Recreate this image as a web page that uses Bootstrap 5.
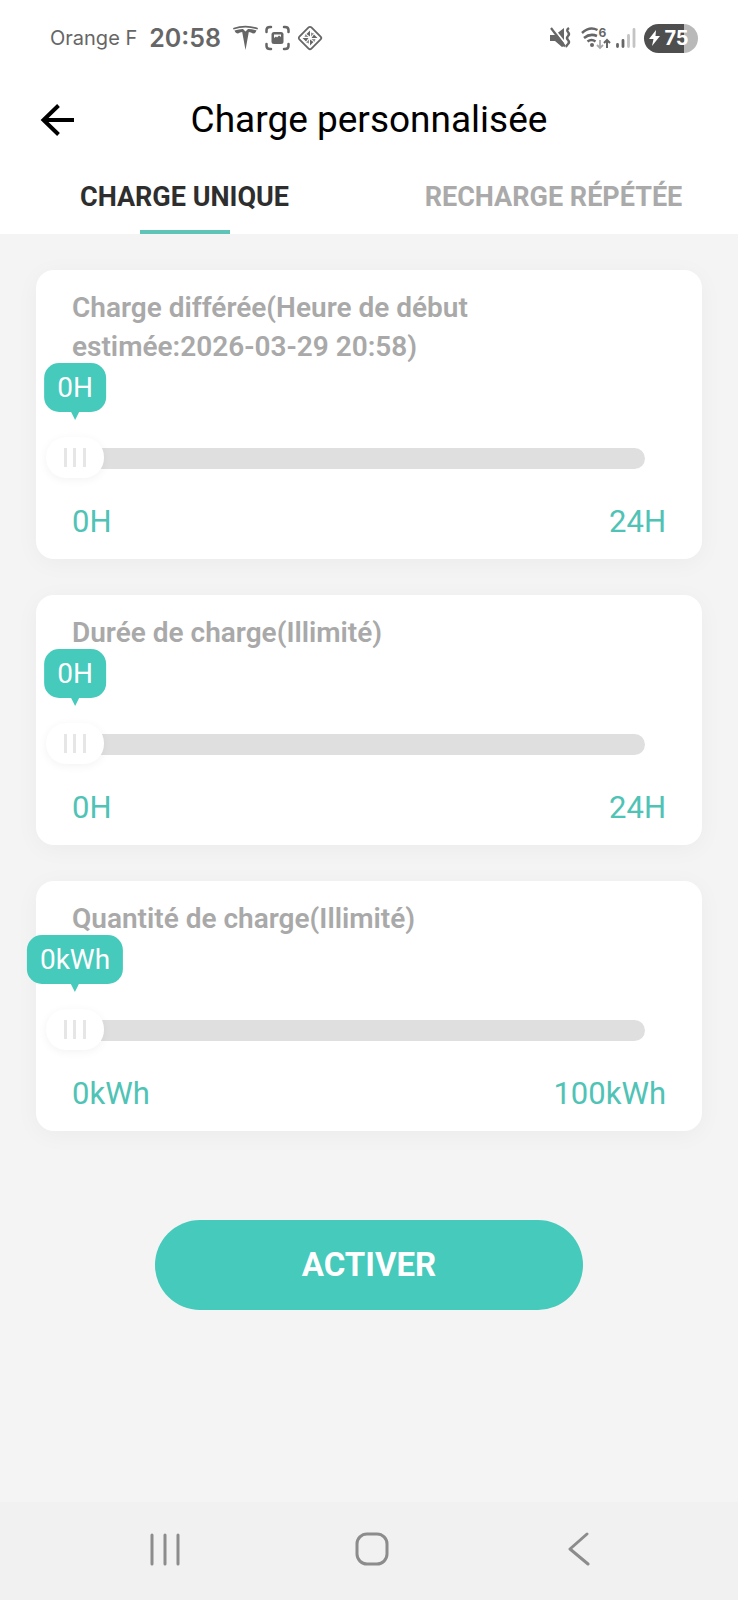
<!DOCTYPE html>
<html lang="fr">
<head>
<meta charset="utf-8">
<meta name="viewport" content="width=device-width, initial-scale=1">
<title>Charge personnalisée</title>
<link href="https://cdn.jsdelivr.net/npm/bootstrap@5.3.0/dist/css/bootstrap.min.css" rel="stylesheet">
<style>
:root { --teal: #45cabb; --page: #f4f4f4; }
body { background: var(--page); font-family: Roboto, "Liberation Sans", sans-serif; color: #000; }

/* Phone status bar */
.status { height: 76px; padding: 0 40px 0 50px; color: #666; font-family: Inter, Roboto, sans-serif; }
.carrier { font-size: 20px; line-height: 28px; margin-right: 12px; }
.clock { font-size: 25px; line-height: 28px; font-weight: 600; margin-right: 12px; }
.status-left svg { margin-right: 7px; }
.battery { width: 54px; height: 29px; color: #fff; font-size: 20px; line-height: 29px; font-weight: 700;
  background: linear-gradient(90deg, #4e4e4e 75%, #b9b9b9 75%); }

/* App header */
.app-title { font-size: 37px; line-height: 48px; font-weight: 400; }
.title-row { height: 88px; padding: 0 40px; }
.title-side { width: 36px; height: 36px; }
.tab-btn { height: 70px; padding: 0 0 5px; border: 0; background: none; position: relative;
  font-size: 27px; line-height: 32px; font-weight: 700; color: #aaa; }
.tab-btn.active { color: #2e2e2e; }
.tab-btn.active::after { content: ""; position: absolute; left: 50%; bottom: 0; width: 90px; height: 4px;
  margin-left: -45px; background: #5ec4b8; }

/* Setting cards */
.panels { padding: 36px 36px 0; gap: 36px; }
.panel { --bs-card-border-width: 0; --bs-card-border-radius: 18px; box-shadow: 0 4px 24px rgba(0, 0, 0, .04); padding: 18px 0; }
.panel-title { padding: 0 36px; margin: 0 0 72px; font-size: 28px; line-height: 39px; font-weight: 600; color: #a9a9a9; }
.slider { position: relative; margin: 0 57px 23px 10px; height: 41px; }
.slider input { display: block; width: 100%; height: 41px; margin: 0; background: none; appearance: none; -webkit-appearance: none; }
.slider input::-webkit-slider-runnable-track { height: 21px; border-radius: 11px; background: linear-gradient(90deg, transparent 29px, #dfdfdf 29px); }
.slider input::-webkit-slider-thumb { -webkit-appearance: none; width: 58px; height: 41px; margin-top: -11px; border: 0; border-radius: 20px;
  background:
    linear-gradient(#e6e6e6, #e6e6e6) 18px 11px / 3px 19px no-repeat,
    linear-gradient(#e6e6e6, #e6e6e6) 27px 11px / 3px 19px no-repeat,
    linear-gradient(#e6e6e6, #e6e6e6) 37px 11px / 3px 19px no-repeat, #fff;
  box-shadow: 0 2px 10px rgba(0, 0, 0, .05); }
.bubble { position: absolute; left: 29px; bottom: 67px; transform: translateX(-50%); padding: 0 13px; border-radius: 15px;
  background: var(--teal); color: #fff; font-size: 28px; line-height: 49px; }
.bubble::after { content: ""; position: absolute; left: 50%; top: 100%; margin-left: -4px;
  border: 4px solid transparent; border-top: 8px solid var(--teal); border-bottom: 0; }
.bounds { padding: 0 36px; font-size: 31px; line-height: 39px; color: #4fc3b5; }

.activate { width: 58%; height: 90px; margin: 89px auto 60px; font-size: 33px; line-height: 40px; font-weight: 700;
  --bs-btn-color: #fff; --bs-btn-bg: var(--teal); --bs-btn-hover-color: #fff; --bs-btn-hover-bg: #3bb9ab; }

/* System navigation */
.sysnav { height: 98px; padding: 0 56px 5px 62px; background: #f1f1f1; }
.sysnav button { border: 0; background: none; }
</style>
</head>
<body>
<div class="d-flex flex-column min-vh-100">
  <header class="bg-white">
    <div class="status d-flex align-items-center justify-content-between">
      <div class="status-left d-flex align-items-center">
        <span class="carrier">Orange F</span>
        <span class="clock">20:58</span>
        <svg width="25" height="26" viewBox="0 0 25 26" fill="#666" aria-hidden="true"><path d="M0 3Q12.500-1.500 25 3L24.500 4.500Q12.500.500.500 4.500ZM1.500 5.500Q7 3.800 10 4L12.500 6.500 15 4Q18 3.800 23.500 5.500 22.500 8.500 20 8.500 18 7 15.800 7L12.500 25 9.200 7Q7 7 5 8.500 2.500 8.500 1.500 5.500Z"/></svg>
        <svg width="25" height="26" viewBox="0 0 25 26" fill="none" stroke="#666" stroke-width="2.500" stroke-linecap="round" aria-hidden="true"><path d="M1.500 7V5Q1.500 2 5 2H6M19 2h1q3.500 0 3.500 3v2M23.500 19v2q0 3-3.500 3h-1M6 24H5q-3.500 0-3.500-3v-2"/><rect x="6.500" y="7" width="12" height="12" rx="2.500" fill="#666" stroke="none"/><path d="M9 9.500h7v2.500l-2-1.500-2 2-1-1-2 1.500Z" fill="#fff" stroke="none"/></svg>
        <svg width="26" height="26" viewBox="0 0 26 26" fill="none" stroke="#666" aria-hidden="true"><rect x="4.500" y="4.500" width="17" height="17" rx="2" stroke-width="1.800" transform="rotate(45 13 13)"/><g fill="#666" stroke="none"><path d="M13 5.500v6L9.500 9ZM20.500 13h-6L17 9.500ZM13 20.500v-6l3.500 2.500ZM5.500 13h6L9 16.500Z"/><path d="M14 7.500l3 1-3 3ZM18.500 14l-1 3-3-3ZM12 18.500l-3-1 3-3ZM7.500 12l1-3 3 3Z" opacity=".7"/></g></svg>
      </div>
      <div class="d-flex align-items-center">
        <svg width="22" height="22" viewBox="0 0 22 22" fill="#666" aria-hidden="true"><path d="M0 8h5l9-7v18l-2 1-7-6H0Z"/><path d="M1.500-1l16 20" stroke="#fff" stroke-width="2"/><path d="M1 1l14 18.500" stroke="#666" stroke-width="2.200"/><path d="M19 1q-3 2-1 4t0 4 0 4 0 4-1 3" fill="none" stroke="#666" stroke-width="2.400"/></svg>
        <svg class="ms-2" width="32" height="28" viewBox="0 -3 32 28" fill="none" stroke="#666" stroke-width="2.500" aria-hidden="true"><path d="M2 6Q9.500-1 17.500 3M4 11q6-5 13-2M7.500 14.500q4-3 8 0"/><circle cx="12" cy="18" r="2" fill="#666" stroke="none"/><text x="18.500" y="10" font-family="Inter, sans-serif" font-size="12" font-weight="700" fill="#666" stroke="none">6</text><path d="M20 13v8m-3-3 3 3 3-3" stroke="#aaa" stroke-width="1.800"/><path d="M27 21v-8m-3 3 3-3 3 3" stroke-width="2"/></svg>
        <svg class="ms-1" width="20" height="20" viewBox="0 0 20 20" stroke-linecap="round" stroke-width="2.800" aria-hidden="true"><path d="M1.500 16.500v2M7 12.500v6" stroke="#666"/><path d="M12.500 7.500v11M18 1.500v17" stroke="#c4c4c4"/></svg>
        <div class="battery rounded-pill d-flex align-items-center justify-content-center ms-2">
          <svg width="11" height="16" viewBox="0 0 11 16" fill="#fff" aria-hidden="true"><path d="M7 0 0 9h4.500L3 16l8-10H6.500Z"/></svg>
          <span class="ms-1 me-1">75</span>
        </div>
      </div>
    </div>
    <div class="title-row d-flex align-items-center justify-content-between">
      <button type="button" class="title-side btn p-0 border-0 d-flex align-items-center" aria-label="Retour">
        <svg width="34" height="32" viewBox="0 0 34 32" fill="none" stroke="#000" stroke-width="4"><path d="M18.500 1.500 3.500 16l15 14.500M3 16h31"/></svg>
      </button>
      <h1 class="app-title m-0">Charge personnalisée</h1>
      <span class="title-side"></span>
    </div>
    <nav class="d-flex" role="tablist">
      <button type="button" class="tab-btn active w-50" role="tab" aria-selected="true">CHARGE UNIQUE</button>
      <button type="button" class="tab-btn w-50" role="tab" aria-selected="false">RECHARGE RÉPÉTÉE</button>
    </nav>
  </header>

  <main class="d-flex flex-column flex-grow-1">
    <div class="panels d-flex flex-column">
      <section class="panel card">
        <label for="delay" class="panel-title">Charge différée(Heure de début <span class="text-nowrap">estimée:2026-03-29 20:58)</span></label>
        <div class="slider">
          <input type="range" id="delay" min="0" max="24" value="0">
          <output for="delay" class="bubble">0H</output>
        </div>
        <div class="bounds d-flex justify-content-between"><span>0H</span><span>24H</span></div>
      </section>
      <section class="panel card">
        <label for="duration" class="panel-title">Durée de charge(Illimité)</label>
        <div class="slider">
          <input type="range" id="duration" min="0" max="24" value="0">
          <output for="duration" class="bubble">0H</output>
        </div>
        <div class="bounds d-flex justify-content-between"><span>0H</span><span>24H</span></div>
      </section>
      <section class="panel card">
        <label for="energy" class="panel-title">Quantité de charge(Illimité)</label>
        <div class="slider">
          <input type="range" id="energy" min="0" max="100" value="0">
          <output for="energy" class="bubble">0kWh</output>
        </div>
        <div class="bounds d-flex justify-content-between"><span>0kWh</span><span>100kWh</span></div>
      </section>
    </div>
    <button type="button" class="activate btn rounded-pill border-0">ACTIVER</button>
  </main>

  <nav class="sysnav d-flex align-items-center">
    <button type="button" class="flex-fill" aria-label="Applications récentes"><svg width="34" height="34" viewBox="0 0 34 34" stroke="#8c8c8c" stroke-width="3" stroke-linecap="round"><path d="M4 3v29M17 3v29M30 3v29"/></svg></button>
    <button type="button" class="flex-fill" aria-label="Accueil"><svg width="34" height="34" viewBox="0 0 34 34" fill="none" stroke="#8c8c8c" stroke-width="3"><rect x="2" y="2" width="30" height="30" rx="10"/></svg></button>
    <button type="button" class="flex-fill" aria-label="Précédent"><svg width="34" height="34" viewBox="0 0 34 34" fill="none" stroke="#8c8c8c" stroke-width="3" stroke-linecap="round" stroke-linejoin="round"><path d="M25 2 8 17l18 15"/></svg></button>
  </nav>
</div>
<script src="https://cdn.jsdelivr.net/npm/bootstrap@5.3.0/dist/js/bootstrap.bundle.min.js"></script>
<script>
/* Keep each bubble above its thumb and showing the current value. */
document.querySelectorAll('.slider').forEach(function (slider) {
  var input = slider.querySelector('input'), bubble = slider.querySelector('output');
  var unit = bubble.textContent.replace(/[0-9]/g, '');
  input.addEventListener('input', function () {
    var ratio = input.value / input.max;
    bubble.textContent = input.value + unit;
    bubble.style.left = 'calc(29px + (100% - 58px) * ' + ratio + ')';
  });
});
</script>
</body>
</html>
